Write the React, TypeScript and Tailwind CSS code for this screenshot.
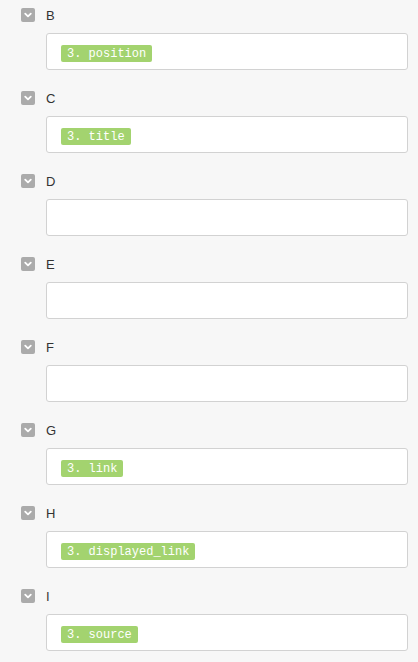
import React from "react";

const rows: { label: string; value?: string }[] = [
  { label: "B", value: "3. position" },
  { label: "C", value: "3. title" },
  { label: "D" },
  { label: "E" },
  { label: "F" },
  { label: "G", value: "3. link" },
  { label: "H", value: "3. displayed_link" },
  { label: "I", value: "3. source" },
];

function Chevron() {
  return (
    <div className="w-[14px] h-[14px] rounded-[2px] bg-[#ababab] flex items-center justify-center">
      <svg width="10" height="10" viewBox="0 0 10 10">
        <path d="M2.2 3.6 L5 6.4 L7.8 3.6" fill="none" stroke="#ffffff" strokeWidth="1.8" strokeLinecap="round" strokeLinejoin="round" />
      </svg>
    </div>
  );
}

export default function App() {
  return (
    <div className="w-[418px] h-[662px] bg-[#f7f7f7] overflow-hidden pl-[21px] pr-[10px]" style={{ fontFamily: '"Liberation Sans", Arial, sans-serif' }}>
      {rows.map((r) => (
        <div key={r.label} className="pt-[8px] pb-[13px]">
          <div className="flex items-center h-[14px] gap-[11px]">
            <Chevron />
            <span className="text-[13px] leading-none text-[#333333] mt-[1px]">{r.label}</span>
          </div>
          <div className="ml-[25px] mt-[11px] h-[37px] bg-white border border-[#d2d2d2] rounded-[3px] pl-[14px] pt-[11px] flex items-start">
            {r.value && (
              <span
                className="flex items-center h-[17px] px-[6px] rounded-[2px] bg-[#a3d36f] text-white text-[12px] leading-none"
                style={{ fontFamily: '"Liberation Mono", "Courier New", monospace' }}
              >
                {r.value}
              </span>
            )}
          </div>
        </div>
      ))}
    </div>
  );
}
